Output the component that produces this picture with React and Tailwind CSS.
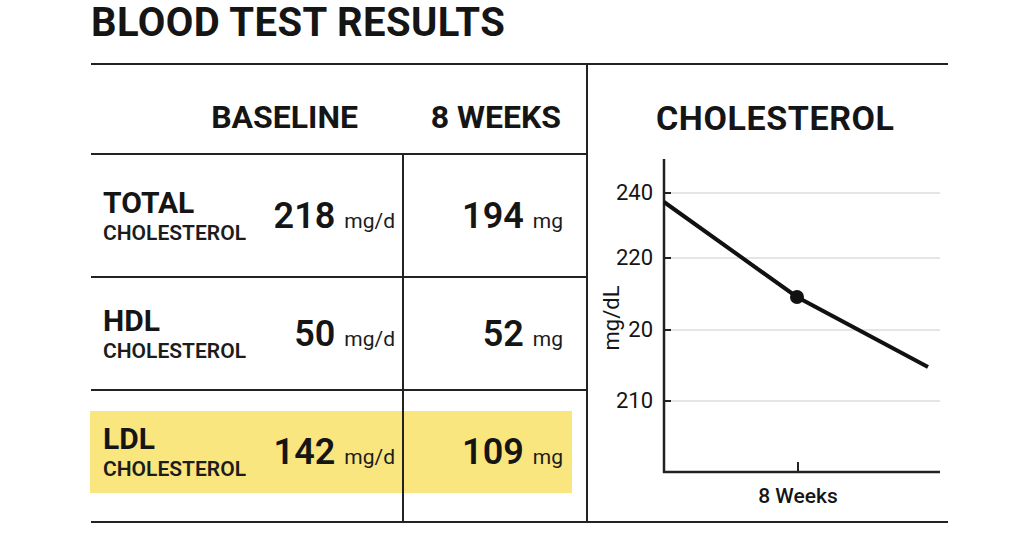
import React from "react";

const rows = [
  { name: "TOTAL", base: "218", after: "194" },
  { name: "HDL", base: "50", after: "52" },
];

function Label({ name }) {
  return (
    <div className="flex flex-col">
      <span className="text-[30px] leading-[30px] font-bold text-[#151515]">{name}</span>
      <span className="mt-[4px] text-[21px] leading-[22px] font-semibold text-[#1c1c1c]">CHOLESTEROL</span>
    </div>
  );
}

function Value({ num, unit }) {
  return (
    <div className="flex items-baseline gap-[9px]">
      <span className="text-[36px] leading-[36px] font-semibold text-[#151515]">{num}</span>
      <span className="text-[21px] leading-[20px] text-[#1c1c1c]">{unit}</span>
    </div>
  );
}

function Chart() {
  const grid = [
    { y: 38, label: "240" },
    { y: 103, label: "220" },
    { y: 175, label: "20" },
    { y: 246, label: "210" },
  ];
  return (
    <svg width="358" height="366" viewBox="0 0 358 366" fontFamily="Roboto, 'Liberation Sans', sans-serif">
      {grid.map((g) => (
        <g key={g.label}>
          <line x1="83" y1={g.y} x2="352" y2={g.y} stroke="#dcdcdc" strokeWidth="1.5" />
          <line x1="75" y1={g.y} x2="83" y2={g.y} stroke="#222" strokeWidth="2" />
          <text x="65" y={g.y + 7} textAnchor="end" fontSize="22" fill="#151515">
            {g.label}
          </text>
        </g>
      ))}
      <text
        x="0"
        y="0"
        transform="translate(31 163) rotate(-90)"
        textAnchor="middle"
        fontSize="22"
        fill="#151515"
      >
        mg/dL
      </text>
      <line x1="76" y1="4" x2="76" y2="318" stroke="#222" strokeWidth="2.5" />
      <line x1="75" y1="317" x2="352" y2="317" stroke="#222" strokeWidth="2.5" />
      <line x1="210" y1="307" x2="210" y2="317" stroke="#222" strokeWidth="2" />
      <polyline points="76,47 209,142 340,212" fill="none" stroke="#111" strokeWidth="4" />
      <circle cx="209" cy="142" r="7" fill="#111" />
      <text x="210" y="348" textAnchor="middle" fontSize="21" fontWeight="500" fill="#151515">
        8 Weeks
      </text>
    </svg>
  );
}

export default function App() {
  return (
    <div className="w-[1024px] h-[538px] bg-white font-['Roboto','Liberation_Sans',sans-serif] text-[#151515]">
      <div className="pl-[91px] pt-[3px]">
        <h1 className="h-[60px] text-[40px] leading-[40px] font-bold tracking-[0.4px]">BLOOD TEST RESULTS</h1>

        <div className="flex w-[857px] h-[460px] border-t-2 border-b-2 border-[#222]">
          {/* table */}
          <div className="w-[497px] border-r-2 border-[#222] flex flex-col">
            <div className="grid grid-cols-[311px_1fr] h-[90px] border-b-2 border-[#222]">
              <div className="flex justify-end pr-[44px] pt-[36px] text-[32px] leading-[32px] font-bold">BASELINE</div>
              <div className="flex justify-end pr-[25px] pt-[36px] text-[32px] leading-[32px] font-bold">8 WEEKS</div>
            </div>

            {rows.map((r, i) => (
              <div
                key={r.name}
                className={`grid grid-cols-[311px_1fr] border-b-2 border-[#222] ${i === 0 ? "h-[123px]" : "h-[113px]"}`}
              >
                <div className="flex items-center justify-between pl-[12px] pr-[7px]">
                  <Label name={r.name} />
                  <Value num={r.base} unit="mg/d" />
                </div>
                <div className="flex items-center justify-end pr-[23px] border-l-2 border-[#222]">
                  <Value num={r.after} unit="mg" />
                </div>
              </div>
            ))}

            <div className="grid grid-cols-[311px_1fr] flex-1">
              <div className="pt-[20px]">
                <div className="h-[82px] -ml-[1px] bg-[#f9e67f] flex items-center justify-between pl-[13px] pr-[7px]">
                  <Label name="LDL" />
                  <Value num="142" unit="mg/d" />
                </div>
              </div>
              <div className="pt-[20px] border-l-2 border-[#222]">
                <div className="h-[82px] w-[168px] bg-[#f9e67f] flex items-center justify-end pr-[9px]">
                  <Value num="109" unit="mg" />
                </div>
              </div>
            </div>
          </div>

          {/* chart */}
          <div className="flex-1 flex flex-col">
            <div className="h-[90px] pl-[68px] pt-[36px] text-[34px] leading-[34px] font-bold tracking-[0.6px]">
              CHOLESTEROL
            </div>
            <Chart />
          </div>
        </div>
      </div>
    </div>
  );
}
